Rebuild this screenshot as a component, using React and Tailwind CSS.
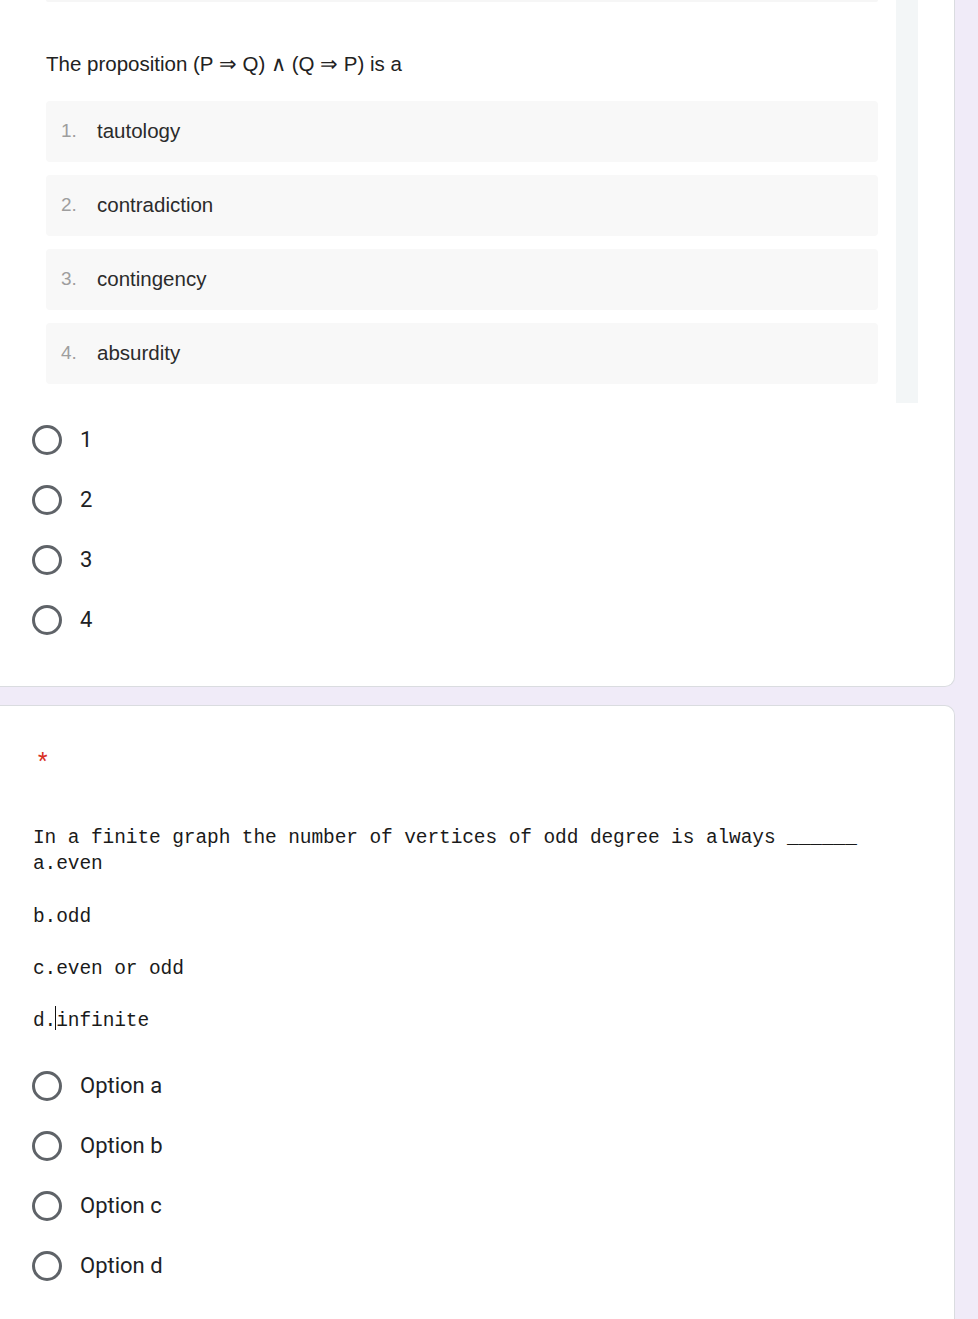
import React from "react";

function Radio({ label }) {
  return (
    <div className="flex h-[60px] items-center">
      <div className="ml-[32px] h-[30px] w-[30px] shrink-0 rounded-full border-[3px] border-[#5f6368]" />
      <span className="ml-[18px] text-[22px] leading-none text-[#202124] [font-family:Roboto,sans-serif]">
        {label}
      </span>
    </div>
  );
}

function OptBox({ n, text }) {
  return (
    <div className="flex h-[61px] items-center rounded-[4px] bg-[#f8f8f8] pl-[15px] [font-family:'Liberation_Sans',Arial,sans-serif]">
      <span className="w-[36px] text-[19px] text-[#9e9e9e]">{n}.</span>
      <span className="text-[20.5px] text-[#2b2b2b]">{text}</span>
    </div>
  );
}

export default function App() {
  return (
    <div className="h-[1319px] w-[978px] overflow-hidden bg-[#f0ebf8]">
      {/* Card 1 */}
      <div className="w-[955px] rounded-br-[10px] border-r border-b border-[#dadce0] bg-white pb-[36px]">
        <div className="flex h-[403px]">
          <div className="w-[878px] pl-[46px]">
            <div className="h-[2px] rounded-b-[4px] bg-[#f6f6f6]" />
            <div className="mt-[48px] text-[20.5px] leading-[28px] text-[#222] [font-family:'Liberation_Sans',Arial,sans-serif]">
              The proposition (P ⇒ Q) ∧ (Q ⇒ P) is a
            </div>
            <div className="mt-[23px] flex flex-col gap-[13px]">
              <OptBox n="1" text="tautology" />
              <OptBox n="2" text="contradiction" />
              <OptBox n="3" text="contingency" />
              <OptBox n="4" text="absurdity" />
            </div>
          </div>
          <div className="ml-[18px] h-[403px] w-[22px] bg-[#f3f6f7]" />
        </div>
        <div className="pt-[7px]">
          <Radio label="1" />
          <Radio label="2" />
          <Radio label="3" />
          <Radio label="4" />
        </div>
      </div>

      {/* Card 2 */}
      <div className="mt-[18px] h-[700px] w-[955px] rounded-tr-[10px] border-t border-r border-[#dadce0] bg-white">
        <div className="pl-[38px] pt-[43px] text-[22px] leading-[24px] text-[#d93025] [font-family:Roboto,sans-serif]">
          *
        </div>
        <div className="mt-[52px] pl-[33px] text-[19.5px] leading-[26.2px] tracking-[-0.1px] whitespace-pre text-[#1a1a1a] [font-family:'Liberation_Mono','DejaVu_Sans_Mono',monospace]">
          <div>In a finite graph the number of vertices of odd degree is always ______</div>
          <div>a.even</div>
          <div>&nbsp;</div>
          <div>b.odd</div>
          <div>&nbsp;</div>
          <div>c.even or odd</div>
          <div>&nbsp;</div>
          <div>
            d.
            <span className="relative">
              <span className="absolute left-[-1px] top-[-4px] h-[24px] w-px bg-[#111]" />
            </span>
            infinite
          </div>
        </div>
        <div className="mt-[21px]">
          <Radio label="Option a" />
          <Radio label="Option b" />
          <Radio label="Option c" />
          <Radio label="Option d" />
        </div>
      </div>
    </div>
  );
}
